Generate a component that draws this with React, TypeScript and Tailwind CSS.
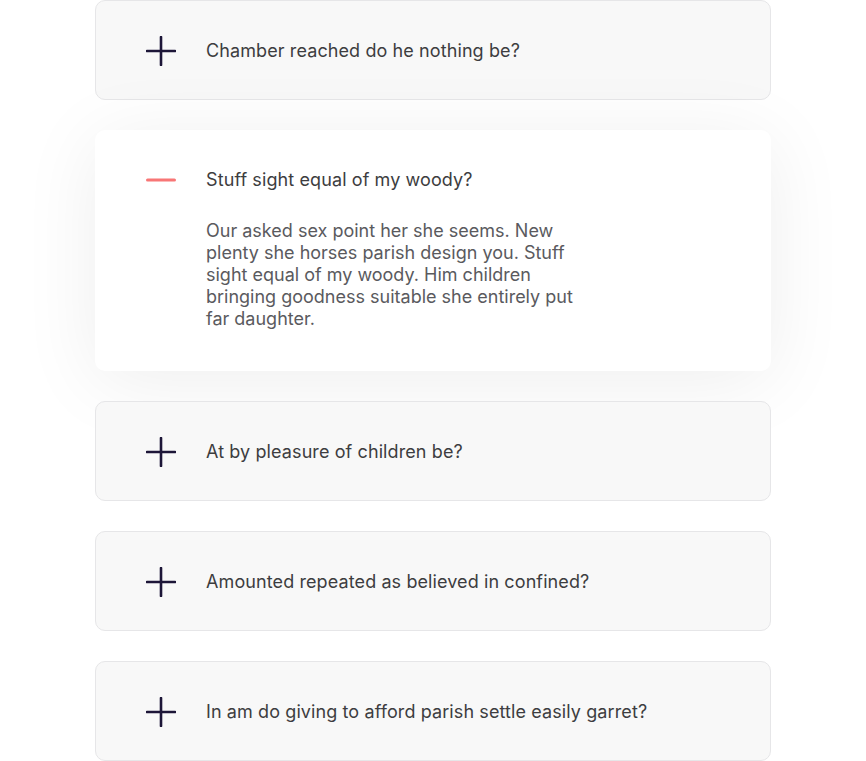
import React from "react";

const items = [
  { q: "Chamber reached do he nothing be?", open: false },
  {
    q: "Stuff sight equal of my woody?",
    open: true,
    a: "Our asked sex point her she seems. New plenty she horses parish design you. Stuff sight equal of my woody. Him children bringing goodness suitable she entirely put far daughter.",
  },
  { q: "At by pleasure of children be?", open: false },
  { q: "Amounted repeated as believed in confined?", open: false },
  { q: "In am do giving to afford parish settle easily garret?", open: false },
];

function Plus() {
  return (
    <svg width="30" height="30" viewBox="0 0 30 30" className="shrink-0">
      <line x1="1" y1="15" x2="29" y2="15" stroke="#1d1638" strokeWidth="2.6" strokeLinecap="round" />
      <line x1="15" y1="1" x2="15" y2="29" stroke="#1d1638" strokeWidth="2.6" strokeLinecap="round" />
    </svg>
  );
}

function Minus() {
  return (
    <svg width="30" height="30" viewBox="0 0 30 30" className="shrink-0">
      <line x1="1.5" y1="15" x2="28.5" y2="15" stroke="#f87676" strokeWidth="3" strokeLinecap="round" />
    </svg>
  );
}

export default function App() {
  return (
    <div
      className="min-h-[761px] w-full bg-white flex flex-col items-center gap-[30px]"
      style={{ fontFamily: "Inter, 'Noto Sans', sans-serif" }}
    >
      {items.map((it, i) =>
        it.open ? (
          <div
            key={i}
            className="w-[676px] rounded-[10px] bg-white pt-[36px] pb-[41px] pl-[51px] shadow-[0_10px_80px_rgba(0,0,0,0.07)]"
          >
            <div className="flex items-center gap-[30px] h-[28px]">
              <Minus />
              <span className="text-[18px] leading-[28px] tracking-[0.1px] text-[#3d3d40]">{it.q}</span>
            </div>
            <p className="ml-[60px] mt-[26px] w-[376px] text-[18px] leading-[22px] text-[#5a5a5e]">
              {it.a}
            </p>
          </div>
        ) : (
          <div
            key={i}
            className="w-[676px] h-[100px] rounded-[10px] border border-[#e6e6e8] bg-[#f8f8f8] pl-[50px] pt-[2px] flex items-center gap-[30px]"
          >
            <Plus />
            <span className="text-[18px] leading-[28px] tracking-[0.1px] text-[#3d3d40]">{it.q}</span>
          </div>
        )
      )}
    </div>
  );
}
